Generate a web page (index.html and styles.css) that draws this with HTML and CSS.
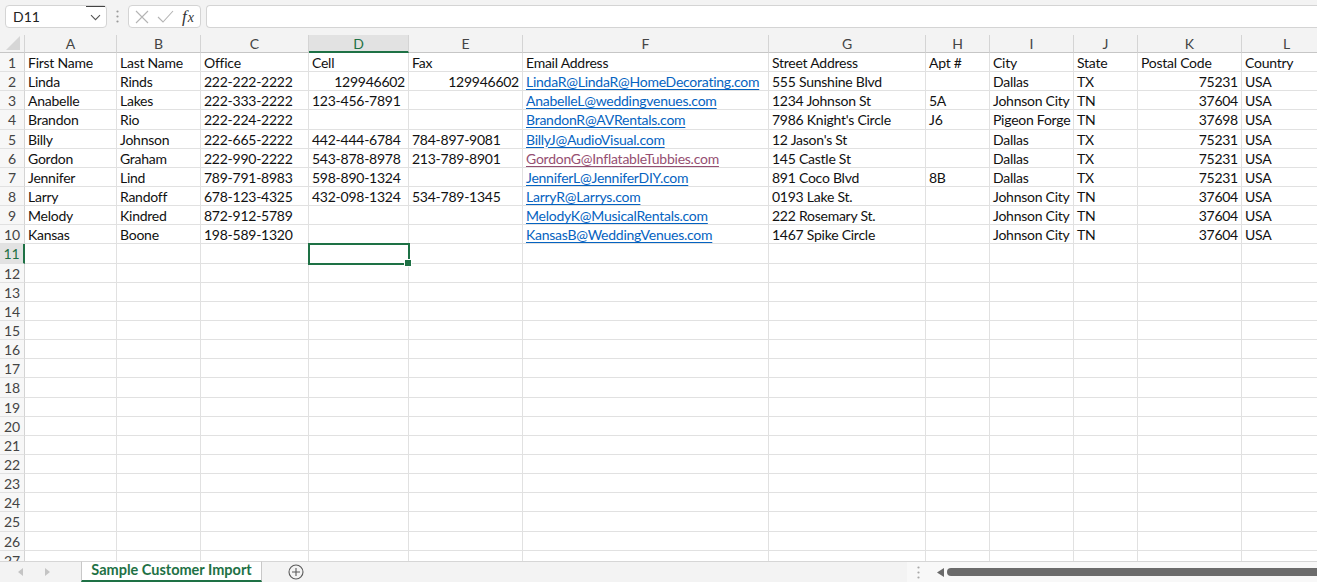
FILE: index.html
```html
<!DOCTYPE html>
<html>
<head>
<meta charset="utf-8">
<title>Sample Customer Import</title>
<link rel="stylesheet" href="styles.css">
</head>
<body>
<div class="app">
  <div class="toolbar">
    <div class="namebox">
      <span class="nb-text">D11</span>
      <span class="nb-drop"><svg width="11" height="7" viewBox="0 0 11 7"><path d="M1 1.2l4.5 4.5 4.5-4.5" stroke="#555" stroke-width="1.1" fill="none"/></svg></span>
    </div>
    <span class="vdots"><svg width="3" height="13" viewBox="0 0 3 13"><circle cx="1.5" cy="1.5" r="1.1" fill="#9a9a9a"/><circle cx="1.5" cy="6.5" r="1.1" fill="#9a9a9a"/><circle cx="1.5" cy="11.5" r="1.1" fill="#9a9a9a"/></svg></span>
    <div class="fxbox">
      <svg class="ic-x" width="14" height="14" viewBox="0 0 14 14"><path d="M1 1l12 12M13 1L1 13" stroke="#b4b4b4" stroke-width="1.1" fill="none"/></svg>
      <svg class="ic-ok" width="17" height="13" viewBox="0 0 17 13"><path d="M1 7l5 5L16 1" stroke="#b4b4b4" stroke-width="1.1" fill="none"/></svg>
      <span class="fx"><i>f</i><i class="fxx">x</i></span>
    </div>
    <div class="formula"></div>
  </div>

  <div class="sheet">
    <div class="grid">
      <div class="corner"><svg width="14" height="14" viewBox="0 0 14 14"><path d="M14 0V14H0Z" fill="#d6d6d6"/></svg></div>
      <div class="ch">A</div><div class="ch">B</div><div class="ch">C</div><div class="ch sel">D</div><div class="ch">E</div><div class="ch">F</div><div class="ch">G</div><div class="ch">H</div><div class="ch">I</div><div class="ch">J</div><div class="ch">K</div><div class="ch">L</div>

      <div class="rh">1</div><div>First Name</div><div>Last Name</div><div>Office</div><div>Cell</div><div>Fax</div><div>Email Address</div><div>Street Address</div><div>Apt #</div><div>City</div><div>State</div><div>Postal Code</div><div>Country</div>

      <div class="rh">2</div><div>Linda</div><div>Rinds</div><div>222-222-2222</div><div class="r">129946602</div><div class="r">129946602</div><div><span class="link">LindaR@LindaR@HomeDecorating.com</span></div><div>555 Sunshine Blvd</div><div></div><div>Dallas</div><div>TX</div><div class="r">75231</div><div>USA</div>

      <div class="rh">3</div><div>Anabelle</div><div>Lakes</div><div>222-333-2222</div><div>123-456-7891</div><div></div><div><span class="link">AnabelleL@weddingvenues.com</span></div><div>1234 Johnson St</div><div>5A</div><div>Johnson City</div><div>TN</div><div class="r">37604</div><div>USA</div>

      <div class="rh">4</div><div>Brandon</div><div>Rio</div><div>222-224-2222</div><div></div><div></div><div><span class="link">BrandonR@AVRentals.com</span></div><div>7986 Knight's Circle</div><div>J6</div><div>Pigeon Forge</div><div>TN</div><div class="r">37698</div><div>USA</div>

      <div class="rh">5</div><div>Billy</div><div>Johnson</div><div>222-665-2222</div><div>442-444-6784</div><div>784-897-9081</div><div><span class="link">BillyJ@AudioVisual.com</span></div><div>12 Jason's St</div><div></div><div>Dallas</div><div>TX</div><div class="r">75231</div><div>USA</div>

      <div class="rh">6</div><div>Gordon</div><div>Graham</div><div>222-990-2222</div><div>543-878-8978</div><div>213-789-8901</div><div><span class="link visited">GordonG@InflatableTubbies.com</span></div><div>145 Castle St</div><div></div><div>Dallas</div><div>TX</div><div class="r">75231</div><div>USA</div>

      <div class="rh">7</div><div>Jennifer</div><div>Lind</div><div>789-791-8983</div><div>598-890-1324</div><div></div><div><span class="link">JenniferL@JenniferDIY.com</span></div><div>891 Coco Blvd</div><div>8B</div><div>Dallas</div><div>TX</div><div class="r">75231</div><div>USA</div>

      <div class="rh">8</div><div>Larry</div><div>Randoff</div><div>678-123-4325</div><div>432-098-1324</div><div>534-789-1345</div><div><span class="link">LarryR@Larrys.com</span></div><div>0193 Lake St.</div><div></div><div>Johnson City</div><div>TN</div><div class="r">37604</div><div>USA</div>

      <div class="rh">9</div><div>Melody</div><div>Kindred</div><div>872-912-5789</div><div></div><div></div><div><span class="link">MelodyK@MusicalRentals.com</span></div><div>222 Rosemary St.</div><div></div><div>Johnson City</div><div>TN</div><div class="r">37604</div><div>USA</div>

      <div class="rh">10</div><div>Kansas</div><div>Boone</div><div>198-589-1320</div><div></div><div></div><div><span class="link">KansasB@WeddingVenues.com</span></div><div>1467 Spike Circle</div><div></div><div>Johnson City</div><div>TN</div><div class="r">37604</div><div>USA</div>

      <div class="rh sel">11</div><div></div><div></div><div></div><div class="active"></div><div></div><div></div><div></div><div></div><div></div><div></div><div></div><div></div>
      <div class="rh">12</div><div></div><div></div><div></div><div></div><div></div><div></div><div></div><div></div><div></div><div></div><div></div><div></div>
      <div class="rh">13</div><div></div><div></div><div></div><div></div><div></div><div></div><div></div><div></div><div></div><div></div><div></div><div></div>
      <div class="rh">14</div><div></div><div></div><div></div><div></div><div></div><div></div><div></div><div></div><div></div><div></div><div></div><div></div>
      <div class="rh">15</div><div></div><div></div><div></div><div></div><div></div><div></div><div></div><div></div><div></div><div></div><div></div><div></div>
      <div class="rh">16</div><div></div><div></div><div></div><div></div><div></div><div></div><div></div><div></div><div></div><div></div><div></div><div></div>
      <div class="rh">17</div><div></div><div></div><div></div><div></div><div></div><div></div><div></div><div></div><div></div><div></div><div></div><div></div>
      <div class="rh">18</div><div></div><div></div><div></div><div></div><div></div><div></div><div></div><div></div><div></div><div></div><div></div><div></div>
      <div class="rh">19</div><div></div><div></div><div></div><div></div><div></div><div></div><div></div><div></div><div></div><div></div><div></div><div></div>
      <div class="rh">20</div><div></div><div></div><div></div><div></div><div></div><div></div><div></div><div></div><div></div><div></div><div></div><div></div>
      <div class="rh">21</div><div></div><div></div><div></div><div></div><div></div><div></div><div></div><div></div><div></div><div></div><div></div><div></div>
      <div class="rh">22</div><div></div><div></div><div></div><div></div><div></div><div></div><div></div><div></div><div></div><div></div><div></div><div></div>
      <div class="rh">23</div><div></div><div></div><div></div><div></div><div></div><div></div><div></div><div></div><div></div><div></div><div></div><div></div>
      <div class="rh">24</div><div></div><div></div><div></div><div></div><div></div><div></div><div></div><div></div><div></div><div></div><div></div><div></div>
      <div class="rh">25</div><div></div><div></div><div></div><div></div><div></div><div></div><div></div><div></div><div></div><div></div><div></div><div></div>
      <div class="rh">26</div><div></div><div></div><div></div><div></div><div></div><div></div><div></div><div></div><div></div><div></div><div></div><div></div>
      <div class="rh">27</div><div></div><div></div><div></div><div></div><div></div><div></div><div></div><div></div><div></div><div></div><div></div><div></div>
    </div>
  </div>

  <div class="tabbar">
    <div class="nav">
      <svg width="6" height="8" viewBox="0 0 6 8"><path d="M5 0v8L0 4z" fill="#c4c4c4"/></svg>
      <svg width="6" height="8" viewBox="0 0 6 8"><path d="M1 0v8l5-4z" fill="#c4c4c4"/></svg>
    </div>
    <div class="tab">Sample Customer Import</div>
    <div class="add"><svg width="16" height="16" viewBox="0 0 16 16"><circle cx="8" cy="8" r="7" stroke="#5a5a5a" stroke-width="1.1" fill="none"/><path d="M8 4v8M4 8h8" stroke="#5a5a5a" stroke-width="1.1"/></svg></div>
    <div class="spacer"></div>
    <div class="hscroll">
      <svg class="hdots" width="3" height="13" viewBox="0 0 3 13"><circle cx="1.5" cy="1.5" r="1.1" fill="#a8a8a8"/><circle cx="1.5" cy="6.5" r="1.1" fill="#a8a8a8"/><circle cx="1.5" cy="11.5" r="1.1" fill="#a8a8a8"/></svg>
      <svg class="harrow" width="7" height="9" viewBox="0 0 7 9"><path d="M7 0v9L0 4.5z" fill="#6a6a6a"/></svg>
      <div class="thumb"></div>
    </div>
  </div>
</div>
</body>
</html>
```

FILE: styles.css
```css
* { box-sizing: border-box; }

html, body {
  margin: 0;
  padding: 0;
  width: 1317px;
  height: 582px;
  overflow: hidden;
  background: #ffffff;
  font-family: "Lato", "Liberation Sans", sans-serif;
  font-size: 14px;
  color: #111;
}

.app {
  display: flex;
  flex-direction: column;
  height: 582px;
}

/* ---------- top toolbar ---------- */
.toolbar {
  height: 35px;
  flex: none;
  background: #f3f3f3;
  display: flex;
  align-items: flex-start;
  padding: 5px 0 0 5px;
}

.namebox {
  width: 102px;
  height: 23px;
  background: #fff;
  border: 1px solid #d4d4d4;
  border-radius: 4px;
  display: flex;
  align-items: center;
  justify-content: space-between;
  padding-left: 7px;
}

.nb-text {
  font-size: 14px;
  color: #222;
}

.nb-drop {
  width: 19px;
  height: 21px;
  display: flex;
  align-items: center;
  justify-content: center;
  border-top: 1px solid #444;
  margin-right: 1px;
}

.vdots {
  width: 21px;
  height: 23px;
  display: flex;
  align-items: center;
  justify-content: center;
}

.fxbox {
  width: 73px;
  height: 23px;
  background: #fff;
  border: 1px solid #d4d4d4;
  border-radius: 4px;
  display: flex;
  align-items: center;
  padding-left: 6px;
}

.ic-x { margin-right: 8px; }
.ic-ok { margin-right: 8px; }

.fx {
  font-family: "Liberation Serif", "DejaVu Serif", serif;
  font-size: 17px;
  color: #333;
  line-height: 1;
}
.fx i { font-style: italic; }
.fxx { font-size: 14px; margin-left: 1px; }

.formula {
  flex: 1;
  height: 23px;
  margin-left: 5px;
  background: #fff;
  border: 1px solid #d4d4d4;
  border-right: none;
  border-radius: 4px 0 0 4px;
}

/* ---------- sheet grid ---------- */
.sheet {
  flex: 1;
  overflow: hidden;
  background: #fff;
}

.grid {
  display: grid;
  grid-template-columns: 25px 92px 84px 108px 100px 114px 246px 157px 64px 84px 64px 104px 90px;
  grid-template-rows: 18px;
  grid-auto-rows: 19.15px;
  letter-spacing: -0.25px;
}

.grid > div {
  border-right: 1px solid #e1e1e1;
  border-bottom: 1px solid #e1e1e1;
  padding: 0 3px;
  white-space: nowrap;
  overflow: hidden;
  line-height: 19px;
}

.grid > .r { text-align: right; }

.grid > .corner {
  background: #f3f3f3;
  border-right: 1px solid #d4d4d4;
  border-bottom: 1px solid #c6c6c6;
  display: flex;
  align-items: flex-end;
  justify-content: flex-end;
  padding: 0 4px 2px 0;
}

.grid > .ch {
  background: #f3f3f3;
  border-right: 1px solid #d4d4d4;
  border-bottom: 1px solid #c6c6c6;
  text-align: center;
  color: #444;
  line-height: 18px;
  font-size: 14px;
  letter-spacing: 0;
}

.grid > .ch.sel {
  background: #e2e2e2;
  color: #1e7145;
  border-bottom: 2px solid #1e7145;
}

.grid > .rh {
  background: #f7f7f7;
  border-right: 1px solid #d4d4d4;
  border-bottom: 1px solid #e1e1e1;
  text-align: center;
  color: #444;
  padding: 0;
  letter-spacing: 0;
}

.grid > .rh.sel {
  background: #e2e2e2;
  color: #1e7145;
  border-right: 2px solid #1e7145;
}

.link {
  color: #0563c1;
  text-decoration: underline;
  text-underline-offset: 2px;
}

.link.visited { color: #954f72; }

.grid > .active {
  position: relative;
  overflow: visible;
  outline: 2px solid #1e7145;
  outline-offset: -1px;
  z-index: 2;
}

.grid > .active::after {
  content: "";
  position: absolute;
  right: -4px;
  bottom: -4px;
  width: 6px;
  height: 6px;
  background: #1e7145;
  border: 1px solid #fff;
}

/* ---------- bottom tab bar ---------- */
.tabbar {
  height: 21px;
  flex: none;
  background: #f3f3f3;
  border-top: 1px solid #d6d6d6;
  display: flex;
  align-items: stretch;
}

.nav {
  width: 81px;
  display: flex;
  align-items: center;
  gap: 20px;
  padding-left: 18px;
}

.tab {
  width: 181px;
  margin-top: -1px;
  background: #fff;
  border-left: 1px solid #c8c8c8;
  border-right: 1px solid #c8c8c8;
  border-top: 1px solid #d6d6d6;
  border-bottom: 2px solid #1e7145;
  color: #1e7145;
  font-weight: 700;
  font-size: 14.5px;
  text-align: center;
  line-height: 16px;
  height: 21px;
}

.add {
  margin-left: 26px;
  display: flex;
  align-items: center;
}

.spacer { flex: 1; }

.hscroll {
  width: 410px;
  background: #f8f8f8;
  display: flex;
  align-items: center;
  padding-left: 10px;
}

.hdots { margin-right: 17px; }
.harrow { margin-right: 3px; }

.thumb {
  flex: 1;
  height: 8px;
  background: #6b6b6b;
  border-radius: 4px 0 0 4px;
}
```
